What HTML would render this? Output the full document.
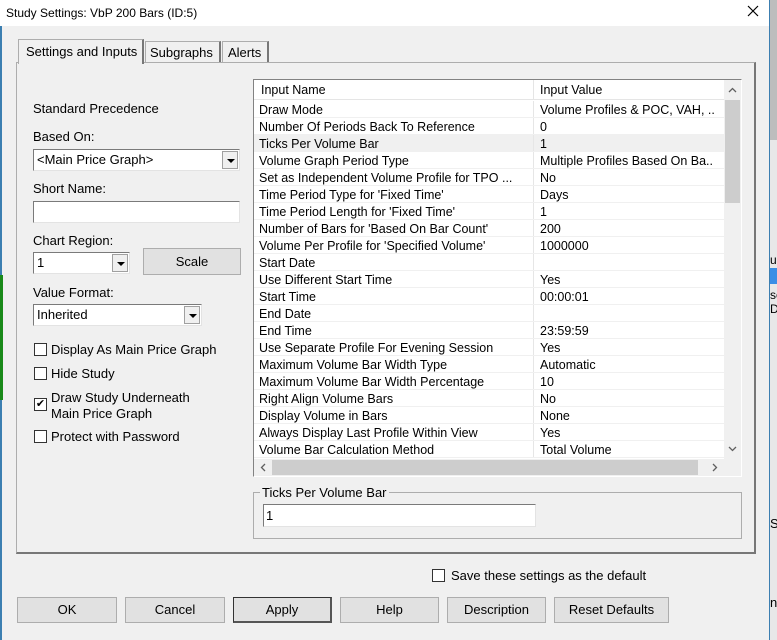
<!DOCTYPE html>
<html><head><style>
*{box-sizing:border-box;margin:0;padding:0}
body{width:777px;height:640px;position:relative;overflow:hidden;background:#f0f0f0;font-family:"Liberation Sans",sans-serif;font-size:12px;color:#000}
.a{position:absolute}
.title{left:0;top:0;width:769px;height:26px;background:#fff;font-size:12px;padding:6px 0 0 6px}
.btn{position:absolute;height:26px;border:1px solid #adadad;background:#e1e1e1;text-align:center;line-height:24px;font-size:13px}
.inp{position:absolute;background:#fff;border:1px solid #7a7a7a;border-right-color:#e3e3e3;border-bottom-color:#e3e3e3}
.dd{position:absolute;right:1px;top:1px;width:16px;bottom:1px;background:#f0f0f0;border:1px solid #a0a0a0}
.dd:after{content:"";position:absolute;left:4px;top:7px;border:4px solid transparent;border-top:4px solid #000;border-bottom:0}
.cb{position:absolute;width:13px;height:13px;border:1px solid #333;background:#fff}
.row{position:absolute;left:0;width:470px;height:17px;border-bottom:1px solid #f0f0f0;font-size:12.5px;line-height:18px}
.row span{position:absolute;left:5px}
.row b{font-weight:normal;position:absolute;left:286px;white-space:nowrap}
.row i{position:absolute;left:279px;top:0;bottom:0;border-left:1px solid #e6e6e6}
.lbl{position:absolute;font-size:13px}
</style></head><body>
<div class="a" style="left:0;top:0;width:2px;height:640px;background:#3c7fb1"></div>
<div class="a" style="left:769px;top:0;width:8px;height:640px;background:#e8e8e8;border-left:1px solid #3c7fb1"></div>
<div class="a" style="left:770px;top:0;width:7px;height:140px;background:#bdbdbd"></div>
<div class="a" style="left:770px;top:268px;width:7px;height:16px;background:#3a8ee6"></div>
<div class="a" style="left:770px;top:253px;font-size:12px">ul</div>
<div class="a" style="left:770px;top:288px;font-size:12px;line-height:14px">se<br>D</div>
<div class="a" style="left:770px;top:516px;font-size:13px">S</div>
<div class="a" style="left:770px;top:595px;font-size:13px">nc</div>
<div class="a" style="left:0;top:275px;width:3px;height:125px;background:#1a8a1a"></div>
<div class="a title">Study Settings: VbP 200 Bars (ID:5)</div>
<svg class="a" style="left:747px;top:5px" width="12" height="12"><path d="M1 1L11 11M11 1L1 11" stroke="#000" stroke-width="1.2"/></svg>

<!-- tabs -->
<div class="a" style="left:16px;top:62px;width:740px;height:492px;border:1px solid #adadad;border-right:2px solid #777;border-bottom:2px solid #777;background:#f0f0f0"></div>
<div class="a" style="left:18px;top:39px;width:126px;height:25px;background:#f0f0f0;border:1px solid #adadad;border-bottom:none;border-right:2px solid #777;padding:4px 0 0 7px;font-size:13px">Settings and Inputs</div>
<div class="a" style="left:145px;top:41px;width:76px;height:21px;border:1px solid #adadad;border-bottom:none;border-right:2px solid #777;padding:3px 0 0 4px;font-size:13px">Subgraphs</div>
<div class="a" style="left:222px;top:41px;width:47px;height:21px;border:1px solid #adadad;border-bottom:none;border-right:2px solid #777;padding:3px 0 0 5px;font-size:13px">Alerts</div>

<!-- left panel -->
<div class="lbl" style="left:33px;top:101px">Standard Precedence</div>
<div class="lbl" style="left:33px;top:129px">Based On:</div>
<div class="inp" style="left:33px;top:149px;width:207px;height:22px;padding:2px 3px;font-size:13px">&lt;Main Price Graph&gt;<div class="dd"></div></div>
<div class="lbl" style="left:33px;top:181px">Short Name:</div>
<div class="inp" style="left:33px;top:201px;width:207px;height:22px"></div>
<div class="lbl" style="left:33px;top:233px">Chart Region:</div>
<div class="inp" style="left:33px;top:252px;width:97px;height:22px;padding:2px 3px;font-size:13px">1<div class="dd"></div></div>
<div class="btn" style="left:143px;top:248px;width:98px;height:27px;line-height:25px">Scale</div>
<div class="lbl" style="left:33px;top:285px">Value Format:</div>
<div class="inp" style="left:33px;top:304px;width:169px;height:22px;padding:2px 3px;font-size:13px">Inherited<div class="dd"></div></div>
<div class="cb" style="left:34px;top:343px"></div><div class="lbl" style="left:51px;top:342px">Display As Main Price Graph</div>
<div class="cb" style="left:34px;top:367px"></div><div class="lbl" style="left:51px;top:366px">Hide Study</div>
<div class="cb" style="left:34px;top:398px;font-size:11px;line-height:11px;text-align:center">✔</div><div class="lbl" style="left:51px;top:390px;line-height:16px">Draw Study Underneath<br>Main Price Graph</div>
<div class="cb" style="left:34px;top:430px"></div><div class="lbl" style="left:51px;top:429px">Protect with Password</div>

<!-- grid -->
<div class="a" style="left:253px;top:79px;width:489px;height:398px;border:1px solid #828282;border-right-color:#fff;border-bottom-color:#fff;background:#fff">
 <div class="a" style="left:0;top:0;width:470px;height:20px;background:#fff;border-bottom:1px solid #e5e5e5;font-size:12.5px;line-height:21px">
  <span class="a" style="left:7px">Input Name</span><span class="a" style="left:279px;top:0;bottom:0;border-left:1px solid #e5e5e5"></span><span class="a" style="left:286px">Input Value</span></div>
 <div class="a" style="left:0;top:21px;width:470px;height:358px" id="rows"></div>
 <div class="a" style="left:470px;top:0;width:17px;height:379px;background:#f0f0f0">
  <svg class="a" style="left:4px;top:7px" width="9" height="6"><path d="M1 5L4.5 1.5L8 5" stroke="#606060" stroke-width="1.3" fill="none"/></svg>
  <div class="a" style="left:1px;top:20px;width:15px;height:103px;background:#cdcdcd"></div>
  <svg class="a" style="left:4px;top:366px" width="9" height="6"><path d="M1 1L4.5 4.5L8 1" stroke="#606060" stroke-width="1.3" fill="none"/></svg></div>
 <div class="a" style="left:0;top:379px;width:470px;height:17px;background:#f0f0f0">
  <svg class="a" style="left:6px;top:4px" width="6" height="9"><path d="M5 1L1.5 4.5L5 8" stroke="#606060" stroke-width="1.3" fill="none"/></svg>
  <div class="a" style="left:18px;top:1px;width:426px;height:15px;background:#cdcdcd"></div>
  <svg class="a" style="left:458px;top:4px" width="6" height="9"><path d="M1 1L4.5 4.5L1 8" stroke="#606060" stroke-width="1.3" fill="none"/></svg></div>
 <div class="a" style="left:470px;top:379px;width:17px;height:17px;background:#f0f0f0"></div>
</div>

<div class="a" style="left:253px;top:492px;width:489px;height:47px;border:1px solid #adadad"></div>
<div class="a" style="left:260px;top:485px;background:#f0f0f0;padding:0 2px;font-size:13px">Ticks Per Volume Bar</div>
<div class="inp" style="left:263px;top:504px;width:273px;height:23px;padding:3px 2px;font-size:13px">1</div>

<div class="cb" style="left:432px;top:569px"></div>
<div class="lbl" style="left:451px;top:568px">Save these settings as the default</div>

<div class="btn" style="left:17px;top:597px;width:100px">OK</div>
<div class="btn" style="left:125px;top:597px;width:100px">Cancel</div>
<div class="btn" style="left:233px;top:597px;width:99px;border:1px solid #333;border-right:2px solid #555;border-bottom:2px solid #555">Apply</div>
<div class="btn" style="left:340px;top:597px;width:99px">Help</div>
<div class="btn" style="left:447px;top:597px;width:99px">Description</div>
<div class="btn" style="left:554px;top:597px;width:115px">Reset Defaults</div>

<script>
var d=[["Draw Mode","Volume Profiles &amp; POC, VAH, .."],["Number Of Periods Back To Reference","0"],["Ticks Per Volume Bar","1"],["Volume Graph Period Type","Multiple Profiles Based On Ba.."],["Set as Independent Volume Profile for TPO ...","No"],["Time Period Type for 'Fixed Time'","Days"],["Time Period Length for 'Fixed Time'","1"],["Number of Bars for 'Based On Bar Count'","200"],["Volume Per Profile for 'Specified Volume'","1000000"],["Start Date",""],["Use Different Start Time","Yes"],["Start Time","00:00:01"],["End Date",""],["End Time","23:59:59"],["Use Separate Profile For Evening Session","Yes"],["Maximum Volume Bar Width Type","Automatic"],["Maximum Volume Bar Width Percentage","10"],["Right Align Volume Bars","No"],["Display Volume in Bars","None"],["Always Display Last Profile Within View","Yes"],["Volume Bar Calculation Method","Total Volume"]];
var h="";d.forEach(function(r,i){h+='<div class="row" style="top:'+(i*17)+'px;'+(i==2?'background:#f0f0f0':'')+'"><span>'+r[0]+'</span><i></i><b>'+r[1]+'</b></div>'});
document.getElementById("rows").innerHTML=h;
</script>
</body></html>
